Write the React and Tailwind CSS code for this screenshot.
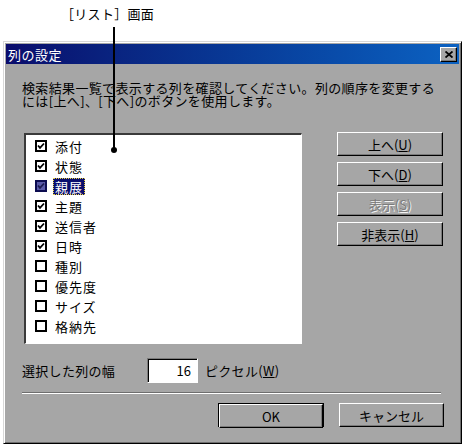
const columns = [
  { label: '添付', checked: true },
  { label: '状態', checked: true },
  { label: '親展', checked: true, selected: true },
  { label: '主題', checked: true },
  { label: '送信者', checked: true },
  { label: '日時', checked: true },
  { label: '種別', checked: false },
  { label: '優先度', checked: false },
  { label: 'サイズ', checked: false },
  { label: '格納先', checked: false },
];

const raised =
  'border-t border-l border-t-white border-l-white border-b border-r border-b-black border-r-black shadow-[inset_-1px_-1px_0_#7a7a7a]';

function Check({ selected }) {
  return (
    <svg width="8" height="8" viewBox="0 0 8 8">
      <polyline
        points="1,3.5 3,5.8 7,1.5"
        fill="none"
        stroke={selected ? '#1a1a50' : '#000'}
        strokeWidth="1.8"
      />
    </svg>
  );
}

function Checkbox({ checked, selected }) {
  return (
    <div
      className={
        selected
          ? 'w-[12px] h-[12px] border-2 border-[#0c0c50] bg-[#5a5aa8] flex items-center justify-center'
          : 'w-[12px] h-[12px] border-2 border-black bg-white flex items-center justify-center'
      }
    >
      {checked && <Check selected={selected} />}
    </div>
  );
}

function Button({ children, disabled, className = '' }) {
  return (
    <div
      className={`${raised} h-[24px] flex items-center justify-center text-[13px] leading-[13px] ${
        disabled ? 'text-[#7c7c7c] [text-shadow:1px_1px_0_#f4f4f4]' : 'text-black'
      } ${className}`}
    >
      {children}
    </div>
  );
}

export default function App() {
  return (
    <div className="relative w-[466px] h-[448px] bg-white text-black font-['Noto_Sans_CJK_JP',sans-serif]">
      <div className="h-[41px] pl-[61px] pt-[6px] text-[13px] leading-[16px] tracking-[0.3px]">
        ［リスト］画面
      </div>

      <div className="ml-[3px] w-[459px] h-[403px] bg-[#a6a6a6] border-t border-l border-[#d8d8d8] border-b border-r border-b-black border-r-black shadow-[inset_1px_1px_0_#fff,inset_-1px_-1px_0_#6e6e6e] p-[2px]">
        <div className="h-[20px] flex items-center justify-between pl-[2px] pr-[2px] bg-linear-to-r from-[#0a0c6c] to-[#0c62c2]">
          <span className="text-white text-[13px] leading-[13px] tracking-[0.5px]">列の設定</span>
          <div className={`${raised} w-[17px] h-[15px] bg-[#a6a6a6] flex items-center justify-center`}>
            <svg width="8" height="7" viewBox="0 0 8 7">
              <path d="M0.5 0.5 L7.5 6.5 M7.5 0.5 L0.5 6.5" stroke="#000" strokeWidth="1.8" />
            </svg>
          </div>
        </div>

        <div className="pl-[16px]">
          <p className="mt-[17px] text-[13px] leading-[13px] tracking-[0.35px]">
            検索結果一覧で表示する列を確認してください。列の順序を変更する
            <br />
            には[上へ]、[下へ]のボタンを使用します。
          </p>

          <div className="mt-[26px] flex">
            <div className="ml-[2px] w-[278px] h-[211px] bg-white border-t-2 border-l-2 border-t-[#3a3a3a] border-l-[#3a3a3a] border-b border-r border-b-white border-r-white pl-[9px] pt-[1px]">
              {columns.map((c) => (
                <div key={c.label} className="h-[20px] flex items-center">
                  <Checkbox checked={c.checked} selected={c.selected} />
                  <span
                    className={
                      c.selected
                        ? 'ml-[6px] px-[2px] h-[17px] flex items-center bg-[#0a0e6e] text-white outline-1 outline-dotted outline-[#e8d040] -outline-offset-1 text-[13px] leading-[13px] tracking-[1px]'
                        : 'ml-[6px] px-[2px] text-[13px] leading-[13px] tracking-[1px]'
                    }
                  >
                    {c.label}
                  </span>
                </div>
              ))}
            </div>

            <div className="ml-[35px] -mt-[1px] w-[106px] flex flex-col gap-[6px]">
              <Button>
                上へ(<span className="underline">U</span>)
              </Button>
              <Button>
                下へ(<span className="underline">D</span>)
              </Button>
              <Button disabled>
                表示(<span className="underline">S</span>)
              </Button>
              <Button>
                非表示(<span className="underline">H</span>)
              </Button>
            </div>
          </div>

          <div className="mt-[14px] flex items-center h-[25px]">
            <span className="w-[125px] text-[13px] leading-[13px] tracking-[0.3px]">選択した列の幅</span>
            <div className="w-[51px] h-[25px] bg-white border-t border-l border-t-[#7a7a7a] border-l-[#7a7a7a] border-b border-r border-b-white border-r-white shadow-[inset_1px_1px_0_#000] flex items-center justify-end pr-[6px] text-[13px] leading-[13px]">
              16
            </div>
            <span className="ml-[7px] text-[13px] leading-[13px] tracking-[0.3px]">
              ピクセル(<span className="underline">W</span>)
            </span>
          </div>

          <div className="mt-[9px] w-[419px] h-[2px] border-t border-t-[#6e6e6e] border-b border-b-white" />

          <div className="mt-[9px] flex">
            <div className="ml-[196px] w-[106px] h-[24px] border border-black">
              <Button className="h-[22px]">OK</Button>
            </div>
            <Button className="ml-[15px] w-[105px]">キャンセル</Button>
          </div>
        </div>
      </div>

      <div className="absolute left-[113px] top-[27px] w-[2px] h-[123px] bg-black" />
      <div className="absolute left-[111px] top-[147px] w-[6px] h-[6px] rounded-full bg-black" />
    </div>
  );
}
